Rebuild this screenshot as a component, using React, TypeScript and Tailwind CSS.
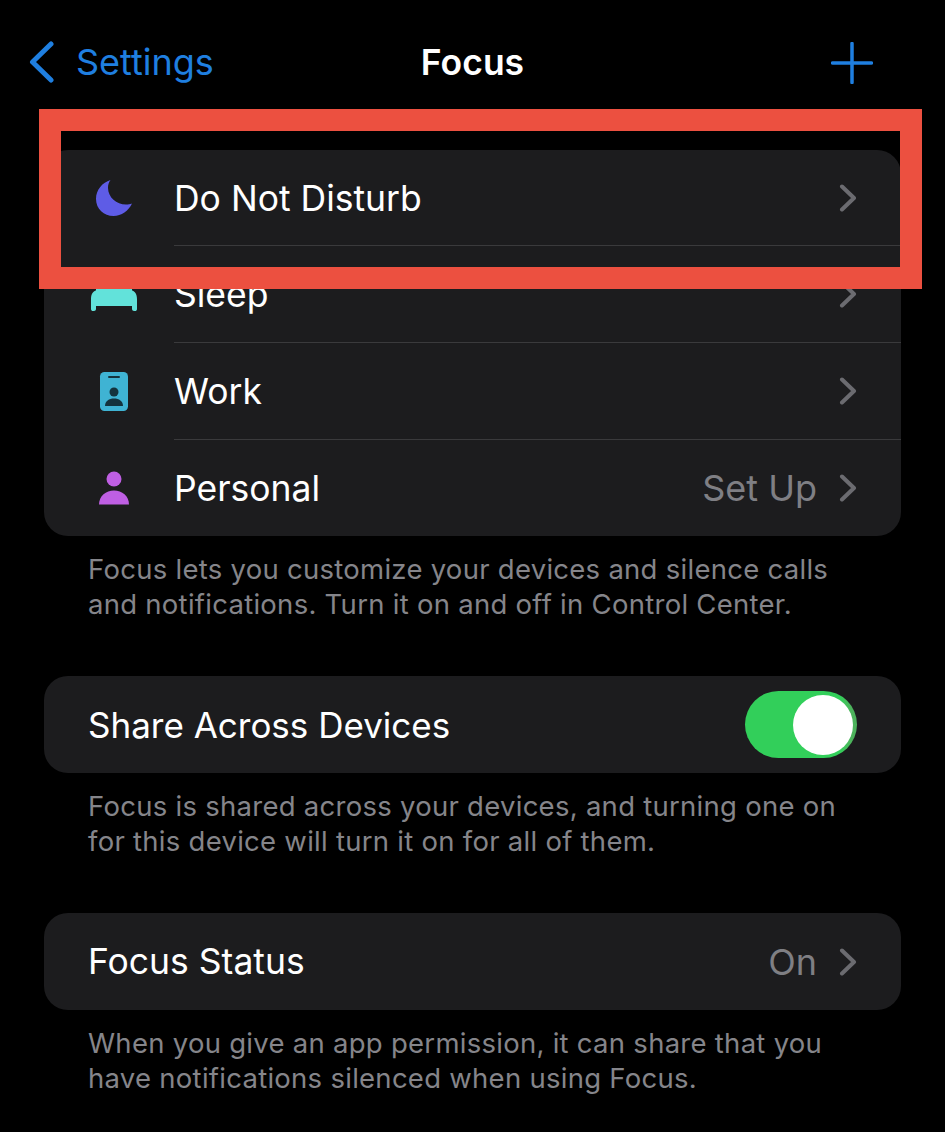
import React from "react";

const Chevron = () => (
  <svg width="18" height="28" viewBox="0 0 18 28" fill="none" className="shrink-0">
    <path d="M3 2.5 L15 14 L3 25.5" stroke="#6b6b70" strokeWidth="4" strokeLinecap="round" strokeLinejoin="round" />
  </svg>
);

const Moon = () => (
  <svg width="38" height="38" viewBox="0 0 38 38">
    <path d="M15.5 1 C7.5 3.5 1 10.5 1 20 C1 30 9 37 18.5 37 C26.5 37 33.5 32 37 24.5 C35 25.3 33.5 25.6 31 25.6 C21.5 25.6 13.2 18.5 13 9 C12.9 6 13.8 3.2 15.5 1 Z" fill="#5e5ce6" />
  </svg>
);

const Bed = () => (
  <svg width="46" height="32" viewBox="0 0 46 32">
    <rect x="5" y="0" width="36" height="16" rx="4" fill="#62e2da" />
    <path d="M0 20 C0 14 3 11 8 11 H38 C43 11 46 14 46 20 V30 C46 31.5 45 32 44 32 H43 C42 32 41 31 41 30 V27 H5 V30 C5 31 4 32 3 32 H2 C1 32 0 31.5 0 30 Z" fill="#62e2da" />
  </svg>
);

const Badge = () => (
  <svg width="30" height="41" viewBox="0 0 30 41">
    <rect x="1" y="1" width="28" height="39" rx="4.5" fill="#3fb3d3" />
    <rect x="9" y="5" width="12" height="2" rx="1" fill="#14333d" />
    <circle cx="15" cy="21" r="4.5" fill="#14333d" />
    <path d="M6 35 C6 30 10 27.5 15 27.5 C20 27.5 24 30 24 35 Z" fill="#14333d" />
  </svg>
);

const Person = () => (
  <svg width="32" height="34" viewBox="0 0 32 34">
    <circle cx="16" cy="8" r="7.5" fill="#bf5fe3" />
    <path d="M1 33.5 C1 25 8 19.5 16 19.5 C24 19.5 31 25 31 33.5 Z" fill="#bf5fe3" />
  </svg>
);

function IconRow({ icon, label, value, last, h }: { icon: React.ReactNode; label: string; value?: string; last?: boolean; h: string }) {
  return (
    <div className={`flex items-stretch ${h}`}>
      <div className="flex w-[130px] shrink-0 items-center justify-center pl-[15px] pr-[5px]">{icon}</div>
      <div className={`flex flex-1 items-center pr-[44px] ${last ? "" : "border-b border-[#3a3a3c]"}`}>
        <span className="flex-1 pt-[2px] text-[35.5px] leading-none text-white">{label}</span>
        {value && <span className="mr-[22px] text-[36px] leading-none text-[#7f7f84]">{value}</span>}
        <Chevron />
      </div>
    </div>
  );
}

function Footer({ lines }: { lines: string[] }) {
  return (
    <div className="pl-[88px] pt-[16px] text-[27.5px] leading-[35px] tracking-[0.27px] text-[#85858a]">
      {lines.map((l) => (
        <div key={l} className="whitespace-nowrap">{l}</div>
      ))}
    </div>
  );
}

export default function App() {
  return (
    <div className="relative h-[1132px] w-[945px] overflow-hidden bg-black font-['Inter',sans-serif]">
      <div className="relative flex h-[150px] items-start pl-[29px] pr-[72px] pt-[41px]">
        <div className="flex items-center gap-[22px]">
          <svg width="25" height="42" viewBox="0 0 25 42" fill="none">
            <path d="M22 3 L3.5 21 L22 39" stroke="#1f7fe0" strokeWidth="5" strokeLinecap="round" strokeLinejoin="round" />
          </svg>
          <span className="text-[36px] leading-none text-[#1f7fe0]">Settings</span>
        </div>
        <div className="absolute left-0 right-0 top-[45px] text-center text-[35.5px] font-semibold leading-none text-white">Focus</div>
        <svg width="42" height="42" viewBox="0 0 42 42" fill="none" className="ml-auto mt-[1px]">
          <path d="M21 1.5 V40.5 M1.5 21 H40.5" stroke="#1f7fe0" strokeWidth="3.5" strokeLinecap="round" />
        </svg>
      </div>

      <div className="mx-[44px] overflow-hidden rounded-[24px] bg-[#1c1c1e]">
        <IconRow h="h-[96px]" icon={<Moon />} label="Do Not Disturb" />
        <IconRow h="h-[97px]" icon={<Bed />} label="Sleep" />
        <IconRow h="h-[97px]" icon={<Badge />} label="Work" />
        <IconRow h="h-[96px]" icon={<Person />} label="Personal" value="Set Up" last />
      </div>
      <Footer lines={["Focus lets you customize your devices and silence calls", "and notifications. Turn it on and off in Control Center."]} />

      <div className="mx-[44px] mt-[54px] flex h-[97px] items-center justify-between rounded-[24px] bg-[#1c1c1e] pl-[44px] pr-[44px]">
        <span className="pt-[1px] text-[35px] leading-none text-white">Share Across Devices</span>
        <div className="flex h-[67px] w-[112px] items-center justify-end rounded-full bg-linear-to-r from-[#32cf5a] from-85% to-[#4db35c] to-95% pr-[4px]">
          <div className="h-[60px] w-[60px] rounded-full bg-white" />
        </div>
      </div>
      <Footer lines={["Focus is shared across your devices, and turning one on", "for this device will turn it on for all of them."]} />

      <div className="mx-[44px] mt-[54px] flex h-[97px] items-center rounded-[24px] bg-[#1c1c1e] pl-[44px] pr-[44px]">
        <span className="flex-1 pt-[1px] text-[35.5px] leading-none text-white">Focus Status</span>
        <span className="mr-[22px] text-[36px] leading-none text-[#7f7f84]">On</span>
        <Chevron />
      </div>
      <Footer lines={["When you give an app permission, it can share that you", "have notifications silenced when using Focus."]} />

      <div className="absolute left-[39px] top-[109px] h-[180px] w-[883px] border-[22px] border-[#ec5040]" />
    </div>
  );
}
